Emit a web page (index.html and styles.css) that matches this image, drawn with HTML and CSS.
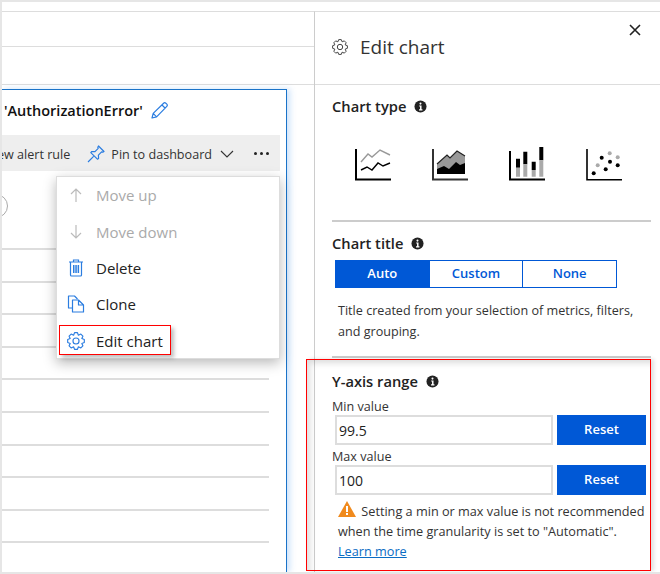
FILE: index.html
```html
<!DOCTYPE html>
<html lang="en">
<head>
    <meta charset="UTF-8">
    <title>Edit chart</title>
    <link rel="stylesheet" href="styles.css">
</head>
<body>
    <svg class="defs" width="0" height="0">
        <symbol id="gear" viewBox="0 0 16 16">
            <path fill="none" stroke="currentColor" stroke-width="1" stroke-linejoin="round" d="M15.39 6.7V9.3L13.17 10.14 14.14 12.3 12.3 14.14 10.14 13.17 9.3 15.39H6.7L5.86 13.17 3.7 14.14 1.86 12.3 2.83 10.14 .61 9.3V6.7L2.83 5.86 1.86 3.7 3.7 1.86 5.86 2.83 6.7 .61H9.3L10.14 2.83 12.3 1.86 14.14 3.7 13.17 5.86Z"/>
            <circle cx="8" cy="8" r="2.7" fill="none" stroke="currentColor" stroke-width="1"/>
        </symbol>
        <symbol id="info" viewBox="0 0 14 14">
            <circle cx="7" cy="7" r="6.5" fill="currentColor"/>
            <circle cx="7" cy="3.9" r="1.1" fill="#fff"/>
            <path d="M5.6 6h2.5v4h1v1.2H5.4V10h1.1V7.1h-.9z" fill="#fff"/>
        </symbol>
    </svg>

    <div class="frame">
        <div class="left">
            <div class="strip strip-a"></div>
            <div class="strip strip-b"></div>
            <div class="card">
                <div class="card-title">
                    <span>'AuthorizationError'</span>
                    <svg class="pencil" width="17" height="17" viewBox="0 0 17 17"><path fill="none" stroke="#2b7de0" stroke-width="1.2" stroke-linejoin="round" d="M1 16l1.2-4.6L12.6 1.2a1.6 1.6 0 0 1 2.2 0l1 1a1.6 1.6 0 0 1 0 2.2L5.6 14.8zM2.2 11.4l3.4 3.4M11 3l3 3"/></svg>
                </div>
                <div class="toolbar">
                    <span class="tool-text clip">New alert rule</span>
                    <svg class="pin" width="18" height="18" viewBox="0 0 18 18"><path fill="none" stroke="#2b7de0" stroke-width="1.2" stroke-linejoin="round" d="M11.5 1L17 6.5 15.8 7.2 14.6 6.9 11.4 10.2 11.6 13.4 10.4 14.2 3.8 7.6 4.8 6.5 8 6.6 11.2 3.4 10.8 2.2zM6.6 11.4L1 17"/></svg>
                    <span class="tool-text">Pin to dashboard</span>
                    <svg class="chevron" width="14" height="8" viewBox="0 0 14 8"><path fill="none" stroke="#333" stroke-width="1.1" d="M1 1l6 6 6-6"/></svg>
                    <span class="dots"><i></i><i></i><i></i></span>
                </div>
                <div class="rows">
                    <div class="row row-first"><span class="circle"></span></div>
                    <div class="row"></div>
                    <div class="row"></div>
                    <div class="row"></div>
                    <div class="row"></div>
                    <div class="row"></div>
                    <div class="row"></div>
                    <div class="row"></div>
                    <div class="row"></div>
                    <div class="row"></div>
                </div>

                <div class="menu">
                    <div class="menu-item disabled">
                        <svg width="16" height="16" viewBox="0 0 16 16"><path fill="none" stroke="#bbb" stroke-width="1.2" d="M8 15V2M3 7l5-5 5 5"/></svg>
                        <span>Move up</span>
                    </div>
                    <div class="menu-item disabled">
                        <svg width="16" height="16" viewBox="0 0 16 16"><path fill="none" stroke="#bbb" stroke-width="1.2" d="M8 1v13M3 9l5 5 5-5"/></svg>
                        <span>Move down</span>
                    </div>
                    <div class="menu-item">
                        <svg width="16" height="18" viewBox="0 0 16 18"><path fill="none" stroke="#2b7de0" stroke-width="1.2" d="M1 3h14M5.5 3V1h5v2M2.5 3v13a1 1 0 0 0 1 1h9a1 1 0 0 0 1-1V3"/><path fill="#2b7de0" d="M5 6h1.5v8H5zM7.3 6h1.5v8H7.3zM9.6 6h1.5v8H9.6z"/></svg>
                        <span>Delete</span>
                    </div>
                    <div class="menu-item">
                        <svg width="17" height="18" viewBox="0 0 17 18"><path fill="none" stroke="#2b7de0" stroke-width="1.2" stroke-linejoin="round" d="M5 13H1V1h6l3 3M5 5h6l5 5v7H5zM11 5v5h5"/></svg>
                        <span>Clone</span>
                    </div>
                    <div class="menu-item">
                        <svg class="icon-blue" width="18" height="18"><use href="#gear"/></svg>
                        <span>Edit chart</span>
                    </div>
                </div>
                <div class="mark mark-edit"></div>
            </div>
        </div>

        <div class="panel">
            <div class="panel-head">
                <svg class="head-gear" width="16" height="16"><use href="#gear"/></svg>
                <span class="panel-title">Edit chart</span>
                <svg class="close" width="12" height="12" viewBox="0 0 12 12"><path stroke="#222" stroke-width="1.6" d="M1 1l10 10M11 1L1 11"/></svg>
            </div>

            <div class="panel-body">
                <section class="sec sec-type">
                    <h2>Chart type <svg class="info" width="13" height="13"><use href="#info"/></svg></h2>
                    <div class="chart-types">
                        <svg width="36" height="34" viewBox="0 0 36 34">
                            <path fill="none" stroke="#999" stroke-width="1.4" d="M6 15l7-8 4 3 8-7 10 5"/>
                            <path fill="none" stroke="#000" stroke-width="1.4" d="M6 23l6-3 5 3 6-7 5 3 7-3"/>
                            <path fill="none" stroke="#000" stroke-width="2" d="M1 2v30.500h35"/>
                        </svg>
                        <svg width="36" height="34" viewBox="0 0 36 34">
                            <path fill="#999" d="M5 17l10-9 3 3 7-7 8 5v18H5z"/>
                            <path fill="none" stroke="#222" stroke-width="1.2" d="M5 17l10-9 3 3 7-7 8 5"/>
                            <path fill="#000" d="M5 27v-5l7-3 5 3 7-7 4 3 5-2v11z"/>
                            <path fill="none" stroke="#333" stroke-width="2" d="M1 2v30.500h35"/>
                        </svg>
                        <svg width="36" height="34" viewBox="0 0 36 34">
                            <path fill="#000" d="M7 11.700h4v9H7zM14.300 4.700h4v12.600h-4zM22.700 14.700h4V23h-4zM30.300 0h4v13.300h-4z"/>
                            <path fill="#aaa" d="M7 20.700h4v9H7zM14.300 17.300h4v12.400h-4zM22.700 23h4v6.700h-4zM30.300 13.300h4v16.400h-4z"/>
                            <path fill="none" stroke="#000" stroke-width="2" d="M1 4v28.500h35"/>
                        </svg>
                        <svg width="36" height="34" viewBox="0 0 36 34">
                            <g fill="#000"><circle cx="15.700" cy="10.700" r="2"/><circle cx="24" cy="14.700" r="2"/><circle cx="31.700" cy="18.300" r="2"/><circle cx="19.700" cy="22.300" r="2"/><circle cx="7.700" cy="26.300" r="2"/></g>
                            <g fill="#aaa"><circle cx="23.700" cy="6.300" r="2"/><circle cx="31.700" cy="10.300" r="2"/><circle cx="11.700" cy="18.300" r="2"/></g>
                            <path fill="none" stroke="#000" stroke-width="1.600" d="M1 2v30.700h35"/>
                        </svg>
                    </div>
                </section>

                <section class="sec sec-title">
                    <h2>Chart title <svg class="info" width="13" height="13"><use href="#info"/></svg></h2>
                    <div class="segments">
                        <span class="segment active">Auto</span>
                        <span class="segment">Custom</span>
                        <span class="segment">None</span>
                    </div>
                    <p class="hint">Title created from your selection of metrics, filters, and grouping.</p>
                </section>

                <section class="sec sec-range">
                    <h2>Y-axis range <svg class="info" width="13" height="13"><use href="#info"/></svg></h2>
                    <label class="field-label">Min value</label>
                    <div class="field">
                        <input class="value" type="text" value="99.5">
                        <button class="reset">Reset</button>
                    </div>
                    <label class="field-label">Max value</label>
                    <div class="field">
                        <input class="value" type="text" value="100">
                        <button class="reset">Reset</button>
                    </div>
                    <p class="warning">
                        <svg class="warn-icon" width="18" height="16" viewBox="0 0 18 16"><path fill="#f08a1d" d="M9 0l9 16H0z"/><path fill="#fff" d="M8 5h2v6H8zM8 12h2v2H8z"/></svg>
                        Setting a min or max value is not recommended when the time granularity is set to "Automatic".
                        <a href="#">Learn more</a>
                    </p>
                </section>
            </div>
            <div class="mark mark-range"></div>
        </div>
    </div>
</body>
</html>
```

FILE: styles.css
```css
* {
    box-sizing: border-box;
}

html, body {
    margin: 0;
    height: 100%;
}

body {
    font-family: "Open Sans", "Noto Sans", sans-serif;
    font-size: 12.6px;
    color: #222;
    background: #fff;
    overflow: hidden;
}

.defs {
    position: absolute;
}

.frame {
    display: flex;
    width: 660px;
    height: 574px;
    padding-top: 9px;
    border-top: 2px solid #e6e6e6;
    border-bottom: 2px solid #e6e6e6;
    border-left: 2px solid #e6e6e6;
    overflow: hidden;
}

/* left side */
.left {
    width: 312px;
    flex: none;
    display: flex;
    flex-direction: column;
    border-top: 1px solid #ddd;
}

.strip-a {
    height: 35px;
    border-bottom: 1px solid #ddd;
}

.strip-b {
    height: 38px;
    border-bottom: 1px solid #ddd;
}

.card {
    position: relative;
    width: 285px;
    flex: 1;
    margin-top: 4px;
    border-top: 1px solid #1a73c8;
    border-right: 1px solid #1a73c8;
    box-shadow: 3px 0 6px rgba(90, 160, 240, .3);
}

.card-title {
    display: flex;
    align-items: center;
    height: 45px;
    padding: 0 0 4px 2px;
    font-size: 14.5px;
    font-weight: 600;
    color: #111;
}

.pencil {
    margin-left: 8px;
}

.toolbar {
    display: flex;
    align-items: center;
    justify-content: flex-end;
    width: 278px;
    height: 36px;
    padding: 2px 11px 0 0;
    background: #eee;
    white-space: nowrap;
    overflow: hidden;
}

.tool-text {
    flex: none;
    color: #333;
}

.pin {
    flex: none;
    margin: 0 6px 0 17px;
}

.chevron {
    flex: none;
    margin: 0 20px 0 8px;
}

.dots {
    display: flex;
    flex: none;
    gap: 3px;
    margin-top: -2px;
}

.dots i {
    width: 3px;
    height: 3px;
    border-radius: 50%;
    background: #222;
}

.rows {
    width: 267px;
}

.row {
    height: 32.6px;
    border-bottom: 2px solid #ddd;
}

.row-first {
    height: 79px;
    display: flex;
    align-items: center;
    overflow: hidden;
}

.circle {
    width: 24px;
    height: 24px;
    margin: -8px 0 0 -18px;
    border: 1px solid #aaa;
    border-radius: 50%;
}

.menu {
    position: absolute;
    left: 54px;
    top: 86px;
    width: 224px;
    height: 183px;
    background: #fff;
    border: 1px solid #ddd;
    box-shadow: 0 4px 12px rgba(0, 0, 0, .28);
}

.menu-item {
    display: flex;
    align-items: center;
    gap: 11px;
    height: 36.4px;
    padding-left: 10px;
    font-size: 15px;
    color: #222;
}

.menu-item svg {
    flex: none;
    width: 18px;
}

.menu-item.disabled {
    color: #aaa;
}

.icon-blue {
    color: #2b7de0;
}

.mark {
    position: absolute;
    border: 1px solid #f00;
    pointer-events: none;
}

.mark-edit {
    left: 57px;
    top: 235px;
    width: 112px;
    height: 30px;
    box-shadow: 3px 3px 4px rgba(0, 0, 0, .25);
}

/* right panel */
.panel {
    position: relative;
    flex: 1;
    border-top: 1px solid #ddd;
    border-left: 1px solid #ccc;
}

.panel-head {
    position: relative;
    display: flex;
    align-items: center;
    height: 73px;
    padding: 0 0 2px 17px;
    border-bottom: 1px solid #ddd;
}

.head-gear {
    color: #444;
}

.panel-title {
    margin-left: 12px;
    font-size: 19px;
    color: #333;
}

.close {
    position: absolute;
    right: 19px;
    top: 12px;
}

.panel-body {
    padding: 0 9px 0 17px;
}

.sec h2 {
    display: flex;
    align-items: center;
    gap: 8px;
    margin: 0;
    font-size: 14.7px;
    font-weight: 600;
    color: #222;
    line-height: 20px;
}

.info {
    color: #222;
}

.sec-type {
    height: 137px;
    padding-top: 11px;
    border-bottom: 2px solid #ccc;
}

.chart-types {
    display: flex;
    gap: 41px;
    margin: 31px 0 0 23px;
}

.sec-title {
    height: 136px;
    padding-top: 11px;
    border-bottom: 2px solid #ccc;
}

.segments {
    display: flex;
    width: 281px;
    margin: 7px 0 0 4px;
}

.segment {
    flex: 1;
    height: 28px;
    line-height: 25px;
    text-align: center;
    font-weight: 600;
    font-size: 13px;
    color: #0058d6;
    border: 1px solid #0058d6;
    margin-left: -1px;
}

.segment.active {
    color: #fff;
    background: #0058d6;
}

.hint {
    margin: 12px 0 0 6px;
    line-height: 21px;
    font-size: 12.6px;
    color: #333;
}

.sec-range {
    padding-top: 13px;
}

.field-label {
    display: block;
    line-height: 16px;
    color: #333;
    font-size: 12.6px;
}

.sec-range h2 + .field-label {
    margin-top: 8px;
}

.field {
    display: flex;
    gap: 4px;
    margin: 0 0 4px 3px;
}

.value {
    width: 218px;
    height: 30px;
    padding: 0 2px;
    border: 2px solid #ddd;
    font: 14px "Open Sans", sans-serif;
    color: #222;
    outline: none;
}

.reset {
    width: 89px;
    height: 30px;
    padding: 0 0 2px;
    border: none;
    background: #0058d6;
    color: #fff;
    font: 600 13px "Open Sans", sans-serif;
}

.warning {
    margin: 6px 0 0 6px;
    line-height: 20px;
    font-size: 12.7px;
    color: #333;
}

.warn-icon {
    vertical-align: -1px;
    margin-right: 2px;
}

.warning a {
    display: block;
    color: #0a6cc4;
}

.mark-range {
    left: -9px;
    top: 347px;
    width: 345px;
    height: 212px;
    box-shadow: 3px 0 4px rgba(0, 0, 0, .12), inset 6px 6px 6px -3px rgba(0, 0, 0, .14);
}
```
